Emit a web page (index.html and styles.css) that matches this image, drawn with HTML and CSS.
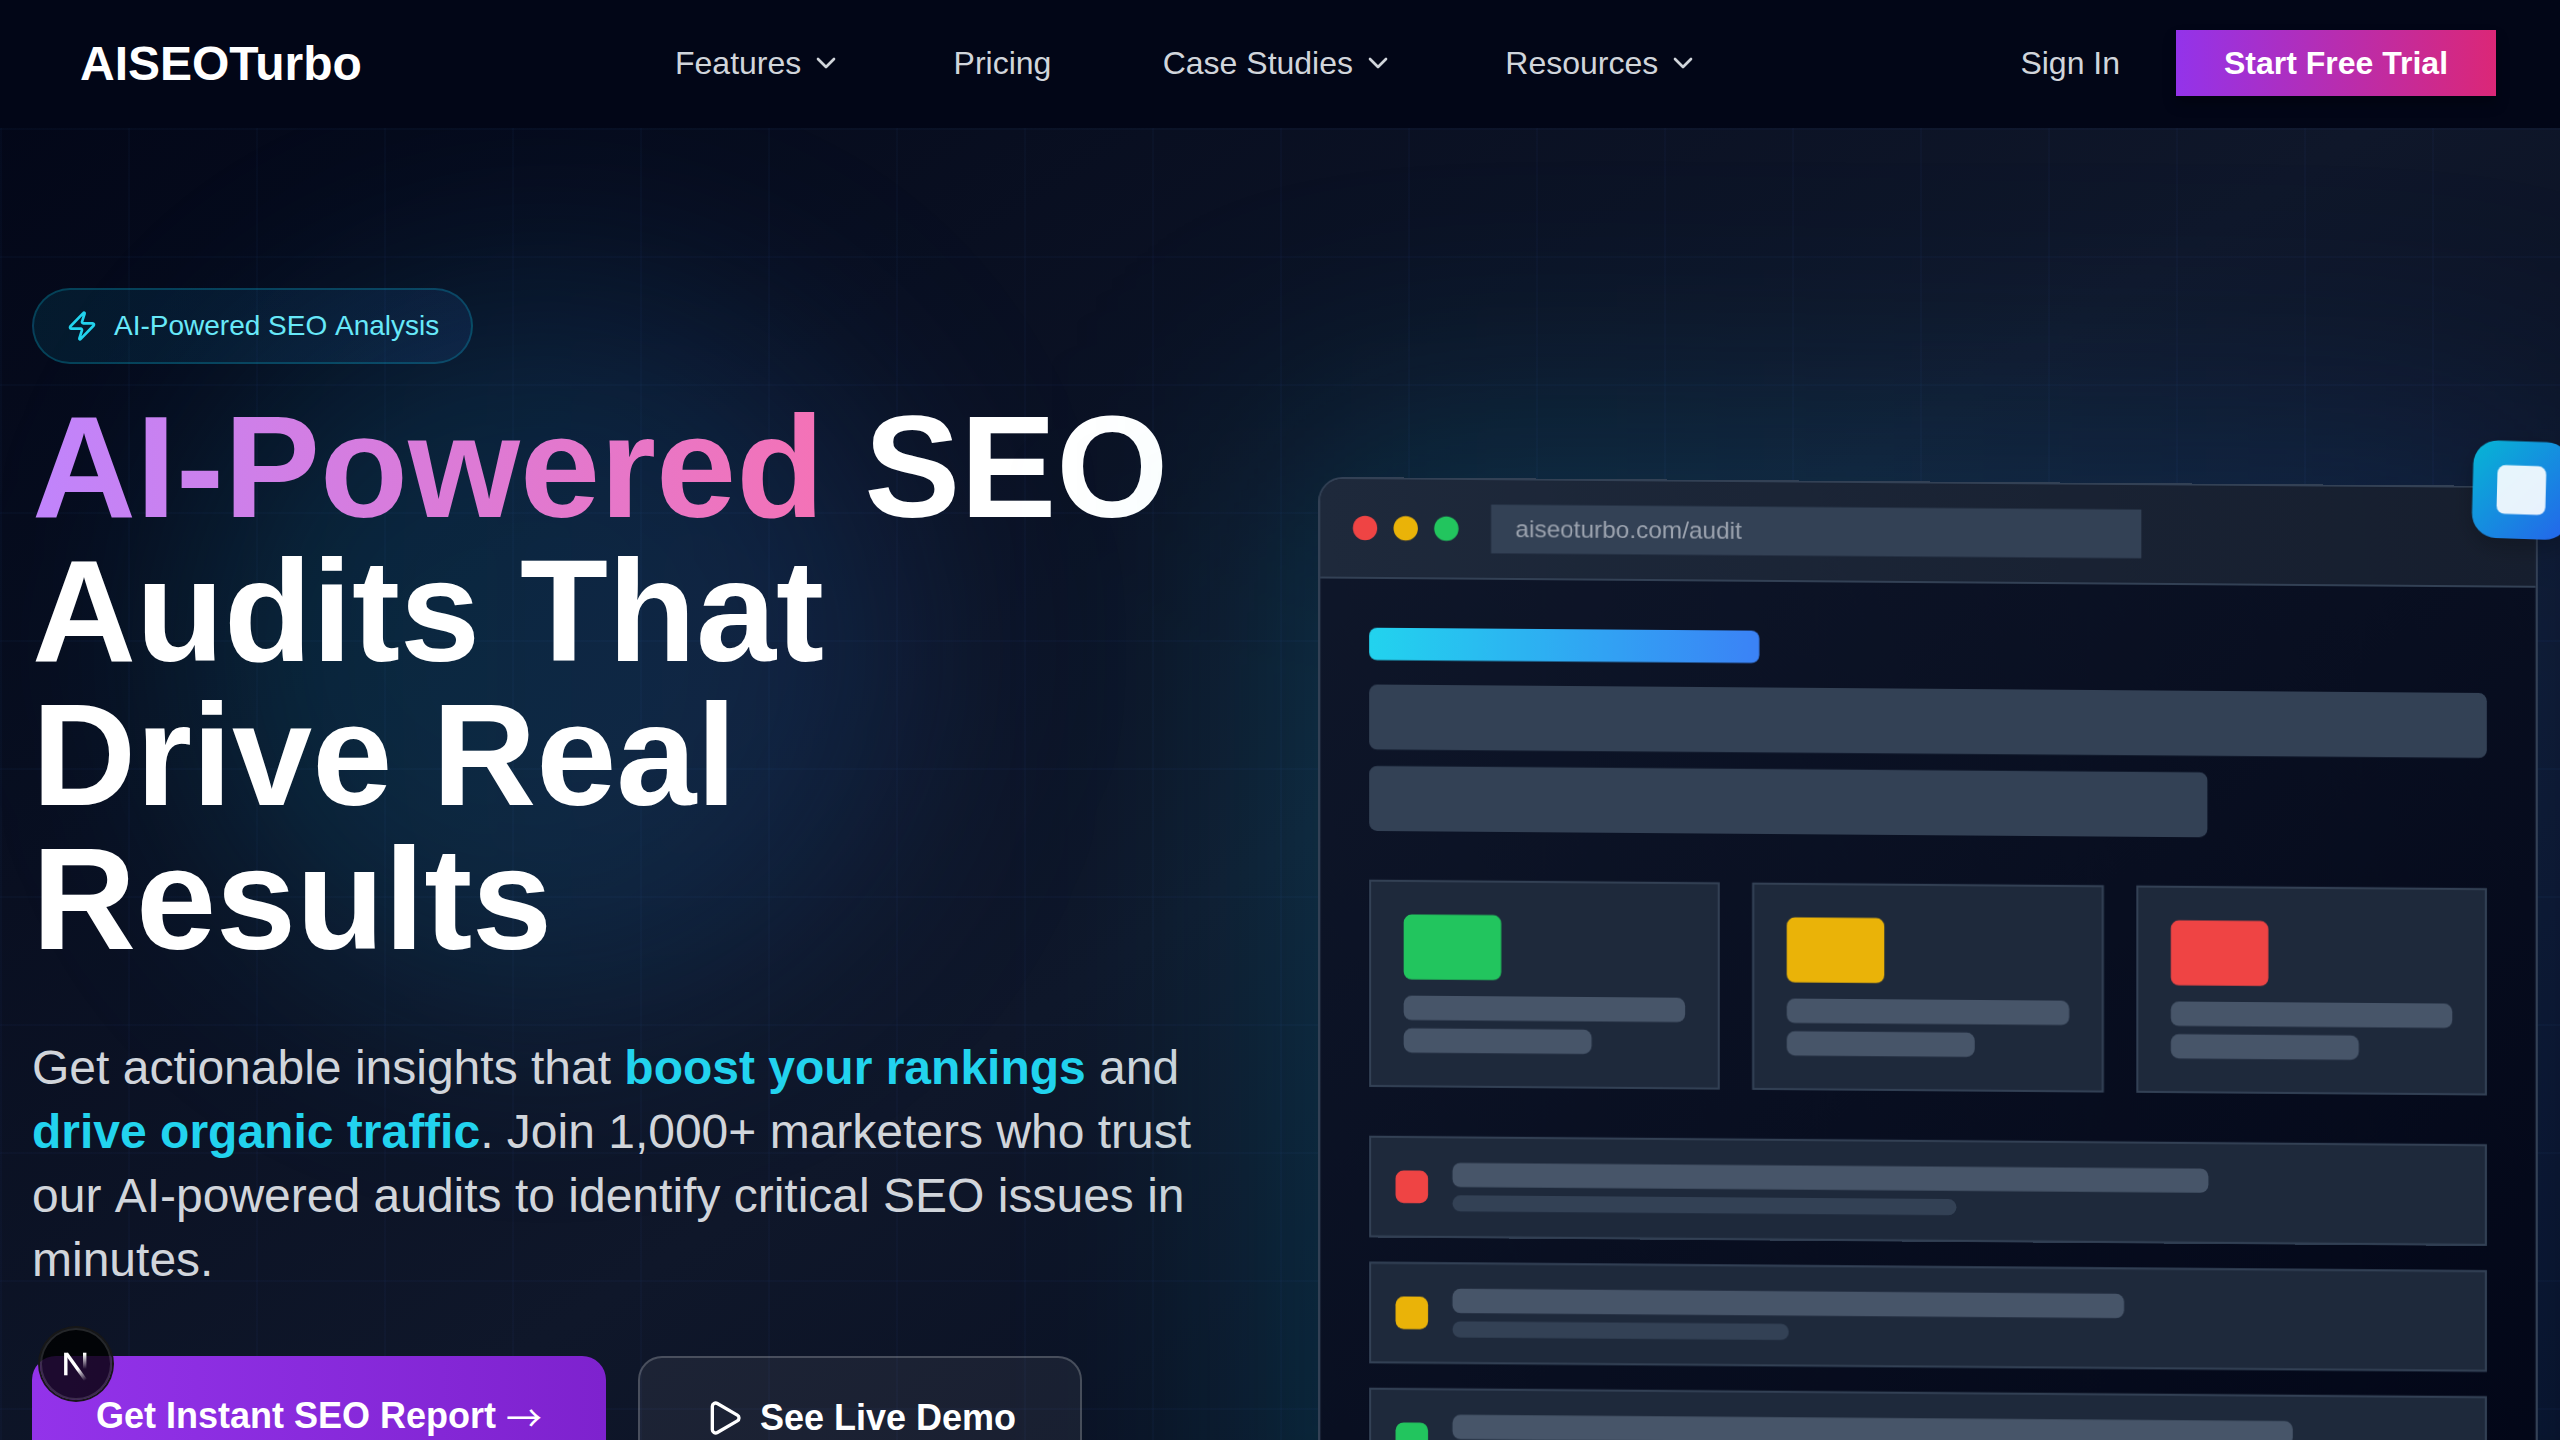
FILE: index.html
```html
<!DOCTYPE html>
<html lang="en">
<head>
<meta charset="utf-8">
<title>AISEOTurbo</title>
<link rel="stylesheet" href="styles.css">
</head>
<body>
<header class="header">
  <a class="logo">AISEOTurbo</a>
  <nav class="nav">
    <a class="nav-link">Features <svg class="chevron" viewBox="0 0 24 24"><path d="m6 9 6 6 6-6"/></svg></a>
    <a class="nav-link">Pricing</a>
    <a class="nav-link">Case Studies <svg class="chevron" viewBox="0 0 24 24"><path d="m6 9 6 6 6-6"/></svg></a>
    <a class="nav-link">Resources <svg class="chevron" viewBox="0 0 24 24"><path d="m6 9 6 6 6-6"/></svg></a>
  </nav>
  <div class="account">
    <a class="sign-in">Sign In</a>
    <a class="trial">Start Free Trial</a>
  </div>
</header>
<main class="hero">
  <div class="glow"></div>
  <div class="grid-lines"></div>
  <section class="copy">
    <div class="badge">
      <svg class="bolt" viewBox="0 0 24 24"><path d="M4 14a1 1 0 0 1-.78-1.63l9.9-10.2a.5.5 0 0 1 .86.46l-1.92 6.02A1 1 0 0 0 13 10h7a1 1 0 0 1 .78 1.63l-9.9 10.2a.5.5 0 0 1-.86-.46l1.92-6.02A1 1 0 0 0 11 14z"/></svg>
      <span>AI-Powered SEO Analysis</span>
    </div>
    <h1 class="title"><span class="title-accent">AI-Powered</span> SEO<br>Audits That<br>Drive Real<br>Results</h1>
    <p class="lead">Get actionable insights that <strong>boost your rankings</strong> and <strong>drive organic traffic</strong>. Join 1,000+ marketers who trust our AI-powered audits to identify critical SEO issues in minutes.</p>
    <div class="actions">
      <a class="button button-primary"><span>Get Instant SEO Report <span class="arrow">→</span></span></a>
      <a class="button button-ghost"><svg class="play" viewBox="0 0 24 24"><path d="M5 5a2 2 0 0 1 3.008-1.728l11.997 6.998a2 2 0 0 1 .003 3.458l-12 7A2 2 0 0 1 5 19z"/></svg>See Live Demo</a>
    </div>
  </section>
  <section class="preview">
    <div class="preview-glow"></div>
    <div class="window">
      <div class="window-bar">
        <i class="dot red"></i><i class="dot yellow"></i><i class="dot green"></i>
        <div class="address">aiseoturbo.com/audit</div>
      </div>
      <div class="window-body">
        <div class="heading-bar"></div>
        <div class="text-bar"></div>
        <div class="text-bar short"></div>
        <div class="cards">
          <div class="card"><i class="swatch green"></i><i class="line"></i><i class="line two-thirds"></i></div>
          <div class="card"><i class="swatch yellow"></i><i class="line"></i><i class="line two-thirds"></i></div>
          <div class="card"><i class="swatch red"></i><i class="line"></i><i class="line two-thirds"></i></div>
        </div>
        <div class="issues">
          <div class="issue"><i class="mark red"></i><div class="issue-text"><i class="line" style="width:75%"></i><i class="line thin" style="width:50%"></i></div></div>
          <div class="issue"><i class="mark yellow"></i><div class="issue-text"><i class="line" style="width:66.67%"></i><i class="line thin" style="width:33.33%"></i></div></div>
          <div class="issue"><i class="mark green"></i><div class="issue-text"><i class="line" style="width:83.33%"></i><i class="line thin" style="width:40%"></i></div></div>
        </div>
      </div>
      <div class="floating"><i class="floating-core"></i></div>
    </div>
  </section>
</main>
<div class="dev-badge">
  <svg class="dev-mark" viewBox="0 0 40 40">
    <defs>
      <linearGradient id="diagonal" gradientUnits="userSpaceOnUse" x1="22" y1="25" x2="30" y2="36"><stop stop-color="#fff"/><stop offset="1" stop-color="#fff" stop-opacity="0"/></linearGradient>
      <linearGradient id="stem" gradientUnits="userSpaceOnUse" x1="29" y1="10" x2="29" y2="25"><stop stop-color="#fff"/><stop offset="1" stop-color="#fff" stop-opacity="0"/></linearGradient>
    </defs>
    <path d="M9.800 31.300V8.700" stroke="#fff"/>
    <path d="M10.500 9.500L29.500 36" stroke="url(#diagonal)"/>
    <path d="M28.700 8.700V26" stroke="url(#stem)"/>
  </svg>
</div>
</body>
</html>
```
FILE: styles.css
```css
* { box-sizing: border-box; }
body {
  margin: 0;
  height: 1440px;
  overflow: hidden;
  background: #020617;
  color: #fff;
  font-family: "Liberation Sans", Arial, sans-serif;
}
i { display: block; }
svg { fill: none; stroke: currentColor; stroke-width: 2; stroke-linecap: round; stroke-linejoin: round; flex: none; }

.header {
  position: relative;
  z-index: 2;
  display: flex;
  align-items: center;
  height: 128px;
  padding: 0 64px 2px 80px;
  background: #020617;
  font-size: 32px;
}
.logo { width: 595px; font-size: 48px; font-weight: 700; }
.nav { display: flex; gap: 111.300px; flex: 1; color: #d1d5db; }
.nav-link { display: flex; align-items: center; gap: 9px; }
.chevron { width: 32px; height: 32px; }
.account { display: flex; align-items: center; gap: 56px; }
.sign-in { color: #d1d5db; }
.trial {
  width: 320px;
  height: 66px;
  line-height: 66px;
  text-align: center;
  font-weight: 700;
  background: linear-gradient(90deg, #9333ea, #db2777);
  box-shadow: 0 8px 12px rgba(0, 0, 0, .3);
}

.hero {
  position: relative;
  display: grid;
  grid-template-columns: 1200px 1200px;
  gap: 96px;
  height: 1700px;
  margin-top: -128px;
  padding: 288px 32px 0;
  align-items: start;
  background: linear-gradient(to bottom right, #020617, #0f172a, #020617);
}
.glow {
  position: absolute;
  left: 190px;
  top: 290px;
  width: 720px;
  height: 720px;
  border-radius: 50%;
  background: linear-gradient(90deg, rgba(6, 182, 212, .17), rgba(59, 130, 246, .16));
  filter: blur(110px);
}
.grid-lines {
  position: absolute;
  inset: 0;
  background-image:
    linear-gradient(rgba(59, 130, 246, .03) 2px, transparent 2px),
    linear-gradient(90deg, rgba(59, 130, 246, .03) 2px, transparent 2px);
  background-size: 128px 128px;
}

.copy { position: relative; }
.badge {
  display: inline-flex;
  vertical-align: top;
  align-items: center;
  gap: 16px;
  height: 76px;
  padding: 0 32px;
  border: 2px solid rgba(6, 182, 212, .26);
  border-radius: 38px;
  background: linear-gradient(90deg, rgba(6, 182, 212, .1), rgba(59, 130, 246, .1));
  color: #67e8f9;
  font-size: 28px;
  font-kerning: none;
}
.bolt { width: 32px; height: 32px; color: #22d3ee; }
.title { margin: 32px 0 64px; font-size: 144px; line-height: 144px; font-weight: 700; }
.title-accent {
  background: linear-gradient(90deg, #c084fc, #f472b6);
  background-clip: text;
  color: transparent;
}
.lead { margin: 0 0 64px; font-size: 48px; line-height: 64px; color: #d1d5db; font-kerning: none; }
.lead strong { color: #22d3ee; }
.actions { display: flex; gap: 32px; }
.button {
  display: flex;
  align-items: center;
  gap: 16px;
  padding: 32px 64px;
  border-radius: 24px;
  font-size: 36px;
  line-height: 56px;
  font-weight: 700;
}
.button-primary { width: 574px; height: 120px; white-space: nowrap; background: linear-gradient(90deg, #9333ea, #7e22ce); }
.arrow {
  display: inline-block;
  font-family: "Noto Sans CJK JP", sans-serif;
  font-weight: 400;
  line-height: 1;
  transform: translateY(4px);
}
.button-ghost { border: 2px solid rgba(255, 255, 255, .2); background: rgba(255, 255, 255, .06); }
.play { width: 40px; height: 40px; }

.preview { position: relative; padding-top: 194px; }
.preview-glow {
  position: absolute;
  left: -50px;
  top: 140px;
  width: 1290px;
  height: 1250px;
  border-radius: 48px;
  background: linear-gradient(90deg, rgba(6, 182, 212, .2), rgba(59, 130, 246, .17));
  filter: blur(128px);
}
.window {
  position: relative;
  border: 2px solid #334155;
  border-radius: 24px;
  background: linear-gradient(to bottom right, #0f172a, #020617);
  transform: translateY(-.5px) scale(1.02) rotateX(5deg) rotateY(5deg);
  transform-origin: 50% 0;
}
.window-bar {
  display: flex;
  align-items: center;
  gap: 16px;
  padding: 24px 32px;
  height: 98px;
  border-bottom: 2px solid #334155;
  border-radius: 22px 22px 0 0;
  background: linear-gradient(90deg, #1e293b, #161e2e);
}
.dot { width: 24px; height: 24px; border-radius: 50%; }
.red { background: #ef4444; }
.yellow { background: #eab308; }
.green { background: #22c55e; }
.address {
  width: 640px;
  height: 48px;
  margin-left: 16px;
  padding: 0 24px;
  background: #334155;
  color: #9ca3af;
  font-size: 24px;
  line-height: 48px;
}
.window-body { padding: 48px; }
.heading-bar { width: 384px; height: 32px; border-radius: 8px; background: linear-gradient(90deg, #22d3ee, #3b82f6); }
.text-bar { height: 64px; margin-top: 24px; border-radius: 8px; background: #334155; }
.text-bar.short { width: 75%; margin-top: 16px; }
.cards { display: grid; grid-template-columns: repeat(3, 1fr); gap: 32px; margin: 48px 0; }
.card { height: 204px; padding: 32px; border: 2px solid #334155; background: #1e293b; }
.swatch { width: 96px; height: 64px; margin-bottom: 16px; border-radius: 8px; }
.line { height: 24px; border-radius: 8px; background: #475569; }
.line + .line { margin-top: 8px; }
.line.thin { height: 16px; background: #334155; }
.two-thirds { width: 66.67%; }
.issues { display: grid; gap: 24px; }
.issue {
  display: flex;
  align-items: center;
  gap: 24px;
  height: 100px;
  padding: 24px;
  border: 2px solid #334155;
  background: #1e293b;
}
.mark { width: 32px; height: 32px; border-radius: 8px; }
.issue-text { flex: 1; }
.floating {
  position: absolute;
  top: -46px;
  right: -34px;
  display: grid;
  place-items: center;
  width: 96px;
  height: 96px;
  border-radius: 24px;
  background: linear-gradient(135deg, #06b6d4, #2563eb);
  box-shadow: 0 8px 24px rgba(0, 0, 0, .25);
  transform: rotate(1.5deg);
}
.floating-core { width: 48px; height: 48px; border-radius: 8px; background: rgba(255, 255, 255, .9); }

.dev-badge {
  position: absolute;
  z-index: 3;
  left: 40px;
  top: 1328px;
  display: grid;
  place-items: center;
  width: 72px;
  height: 72px;
  border-radius: 50%;
  background: rgba(0, 0, 0, .8);
  box-shadow: 0 0 0 2px #171717, inset 0 0 0 2px rgba(255, 255, 255, .14);
}
.dev-mark { width: 40px; height: 40px; stroke-width: 3.4; stroke-linecap: butt; }
```
